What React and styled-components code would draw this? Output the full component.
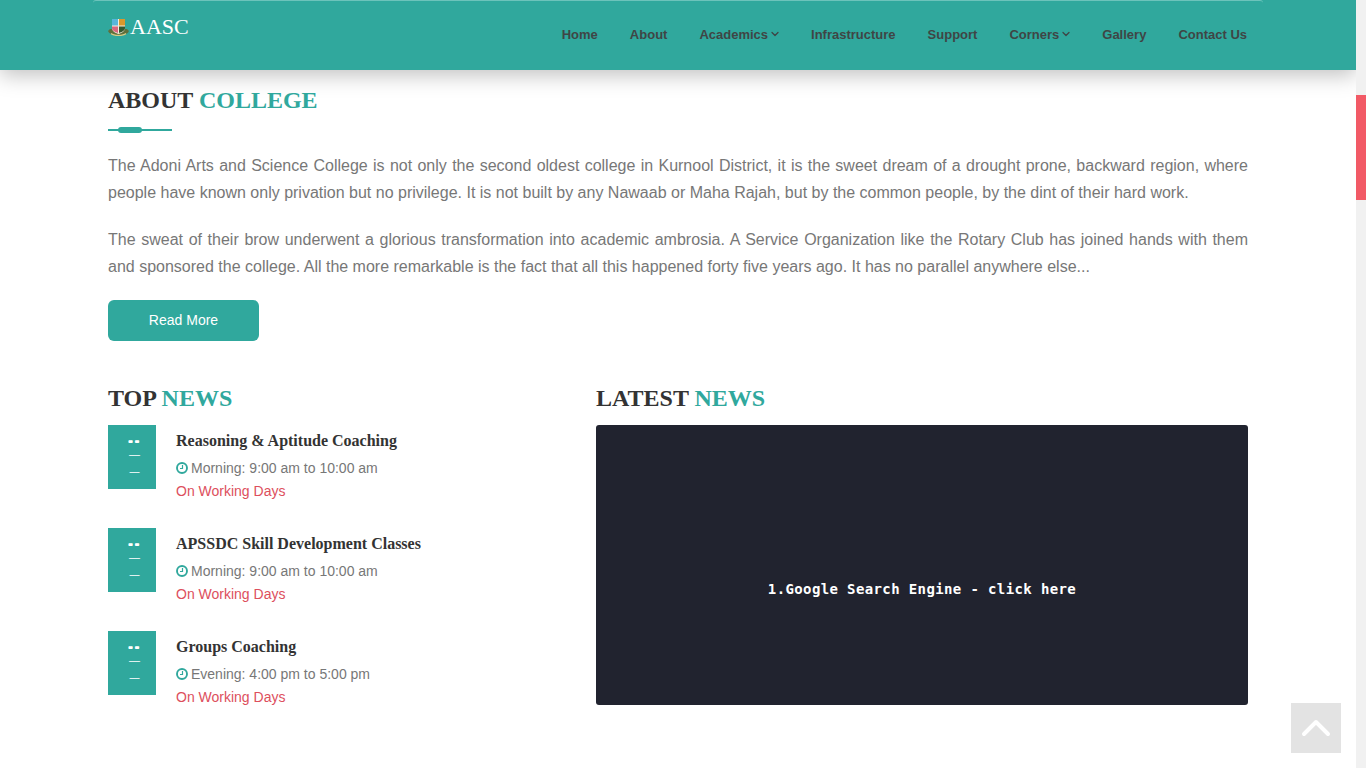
import React from "react";
import styled, { createGlobalStyle } from "styled-components";
import { FiChevronDown, FiChevronUp } from "react-icons/fi";

const teal = "#30a89d";

const GlobalStyle = createGlobalStyle`
  html, body {
    margin: 0;
    padding: 0;
    height: 768px;
    overflow: hidden;
    background: #fff;
    font-family: "Liberation Sans", Arial, sans-serif;
  }
  * { box-sizing: border-box; }
`;

const Page = styled.div`
  display: flex;
  height: 768px;
`;

const Main = styled.div`
  flex: 1;
  min-width: 0;
`;

const ScrollTrack = styled.div`
  width: 10px;
  background: #f1f1f1;
  padding-top: 95px;
`;

const ScrollThumb = styled.div`
  height: 105px;
  background: #f25a66;
`;

const Header = styled.header`
  height: 70px;
  background: ${teal};
  box-shadow: 0 5px 20px rgba(0, 0, 0, 0.25);
`;

const HeaderInner = styled.div`
  width: 1170px;
  height: 70px;
  margin: 0 auto;
  padding: 0 15px;
  display: flex;
  justify-content: space-between;
  border-top: 1px solid #6cc3bb;
  border-radius: 3px 3px 0 0;
`;

const Brand = styled.a`
  display: flex;
  align-items: center;
  gap: 1px;
  height: 52px;
  color: #fff;
  font-family: "Liberation Serif", serif;
  font-size: 22px;
`;

const Nav = styled.nav`
  display: flex;
  align-items: center;
  gap: 32px;
  height: 66px;
  padding-right: 1px;
`;

const NavItem = styled.a`
  display: flex;
  align-items: center;
  gap: 1px;
  color: #3f4545;
  font-size: 13px;
  font-weight: 700;
  svg {
    margin-right: -2px;
    stroke-width: 2.6;
  }
`;

const Container = styled.div`
  width: 1170px;
  margin: 0 auto;
  padding: 15px 15px 0;
`;

const Heading = styled.h2`
  margin: 0;
  font-family: "Liberation Serif", serif;
  font-size: 24px;
  line-height: 30px;
  font-weight: 700;
  color: #333;
  text-transform: uppercase;
`;

const Accent = styled.span`
  color: ${teal};
`;

const Divider = styled.div`
  position: relative;
  width: 64px;
  height: 2px;
  margin: 14px 0 21px;
  background: ${teal};
`;

const DividerPill = styled.span`
  position: absolute;
  left: 10px;
  top: -2px;
  width: 24px;
  height: 6px;
  border-radius: 3px;
  background: ${teal};
`;

const Paragraph = styled.p`
  margin: 0 0 20px;
  font-size: 16px;
  line-height: 27px;
  color: #777;
  text-align: justify;
`;

const ReadMore = styled.a`
  display: flex;
  align-items: center;
  justify-content: center;
  width: 151px;
  height: 41px;
  margin-top: 20px;
  padding-bottom: 1px;
  border-radius: 6px;
  background: ${teal};
  color: #fff;
  font-size: 14px;
`;

const Columns = styled.div`
  display: grid;
  grid-template-columns: 488px 652px;
  margin-top: 42px;
`;

const NewsHeading = styled(Heading)`
  margin-bottom: 12px;
`;

const NewsList = styled.div`
  display: flex;
  flex-direction: column;
  gap: 25px;
`;

const NewsItem = styled.div`
  display: flex;
  gap: 20px;
`;

const DateBox = styled.div`
  width: 48px;
  height: 64px;
  padding: 5px 0 0 5px;
  background: ${teal};
  color: #fff;
  display: flex;
  flex-direction: column;
  align-items: center;
  overflow: hidden;
`;

const DateDay = styled.span`
  height: 19px;
  font-size: 15px;
  line-height: 19px;
  font-weight: 700;
  letter-spacing: 1.5px;
  text-shadow: 0 1px 0 #fff;
`;

const DateLine = styled.span`
  height: ${(p) => p.$height}px;
  font-size: ${(p) => p.$size}px;
  line-height: ${(p) => p.$height}px;
`;

const NewsBody = styled.div`
  display: flex;
  flex-direction: column;
  padding-top: 6px;
`;

const NewsTitle = styled.h4`
  margin: 0 0 6px;
  font-family: "Liberation Serif", serif;
  font-size: 16px;
  line-height: 20px;
  font-weight: 700;
  color: #333;
`;

const NewsTime = styled.div`
  display: flex;
  align-items: center;
  gap: 3px;
  font-size: 14px;
  line-height: 23px;
  color: #777;
  svg {
    margin-bottom: 2px;
  }
`;

const NewsDays = styled.div`
  font-size: 14px;
  line-height: 23px;
  color: #dd4f5d;
`;

const VideoPanel = styled.div`
  height: 280px;
  border-radius: 3px;
  background: #21232f;
  display: flex;
  align-items: center;
  justify-content: center;
  padding-top: 48px;
  color: #fff;
  font-family: "DejaVu Sans Mono", monospace;
  font-size: 14px;
  font-weight: 700;
  letter-spacing: 0.38px;
`;

const BackToTop = styled.a`
  position: fixed;
  right: 25px;
  bottom: 15px;
  width: 50px;
  height: 50px;
  display: flex;
  align-items: center;
  justify-content: center;
  background: #e3e3e3;
  color: #fff;
`;

const Crest = () => (
  <svg width="21" height="19" viewBox="0 0 21 19">
    <path d="M0 13c2 6 19 6 21 0l-2-2H2z" fill="#5f6f3c" />
    <path d="M4 1h13v9c0 3-3 5-6.500 6C7 15 4 13 4 10z" fill="#f4efe0" />
    <rect x="4" y="1" width="6" height="6.500" fill="#57b6da" />
    <rect x="11" y="1" width="6" height="6.500" fill="#d9982c" />
    <path d="M4 8.500h6V15c-3-1-6-2.500-6-5z" fill="#d8677d" />
    <path d="M11 8.500h6V10c0 2.500-3 4-6 5z" fill="#34592f" />
    <path d="M3 15.500c3 2.500 12 2.500 15 0" stroke="#d6cb84" strokeWidth="1.200" fill="none" />
  </svg>
);

const Clock = () => (
  <svg width="12" height="12" viewBox="0 0 12 12" fill="none" stroke={teal}>
    <circle cx="6" cy="6" r="5" strokeWidth="1.900" />
    <path d="M6.500 3v3.500H4" strokeWidth="1.200" />
  </svg>
);

const navItems = [
  { label: "Home" },
  { label: "About" },
  { label: "Academics", menu: true },
  { label: "Infrastructure" },
  { label: "Support" },
  { label: "Corners", menu: true },
  { label: "Gallery" },
  { label: "Contact Us" },
];

const news = [
  { title: "Reasoning & Aptitude Coaching", time: "Morning: 9:00 am to 10:00 am" },
  { title: "APSSDC Skill Development Classes", time: "Morning: 9:00 am to 10:00 am" },
  { title: "Groups Coaching", time: "Evening: 4:00 pm to 5:00 pm" },
];

export default function App() {
  return (
    <Page>
      <GlobalStyle />
      <Main>
        <Header>
          <HeaderInner>
            <Brand>
              <Crest />
              AASC
            </Brand>
            <Nav>
              {navItems.map((item) => (
                <NavItem key={item.label}>
                  {item.label}
                  {item.menu && <FiChevronDown size={12} />}
                </NavItem>
              ))}
            </Nav>
          </HeaderInner>
        </Header>
        <Container>
          <Heading>
            About <Accent>College</Accent>
          </Heading>
          <Divider>
            <DividerPill />
          </Divider>
          <Paragraph>
            The Adoni Arts and Science College is not only the second oldest college in Kurnool
            District, it is the sweet dream of a drought prone, backward region, where people have
            known only privation but no privilege. It is not built by any Nawaab or Maha Rajah, but
            by the common people, by the dint of their hard work.
          </Paragraph>
          <Paragraph>
            The sweat of their brow underwent a glorious transformation into academic ambrosia. A
            Service Organization like the Rotary Club has joined hands with them and sponsored the
            college. All the more remarkable is the fact that all this happened forty five years
            ago. It has no parallel anywhere else...
          </Paragraph>
          <ReadMore>Read More</ReadMore>
          <Columns>
            <div>
              <NewsHeading>
                Top <Accent>News</Accent>
              </NewsHeading>
              <NewsList>
                {news.map((n) => (
                  <NewsItem key={n.title}>
                    <DateBox>
                      <DateDay>--</DateDay>
                      <DateLine $size={11} $height={10}>—</DateLine>
                      <DateLine $size={10} $height={26}>—</DateLine>
                    </DateBox>
                    <NewsBody>
                      <NewsTitle>{n.title}</NewsTitle>
                      <NewsTime>
                        <Clock />
                        {n.time}
                      </NewsTime>
                      <NewsDays>On Working Days</NewsDays>
                    </NewsBody>
                  </NewsItem>
                ))}
              </NewsList>
            </div>
            <div>
              <NewsHeading>
                Latest <Accent>News</Accent>
              </NewsHeading>
              <VideoPanel>1.Google Search Engine - click here</VideoPanel>
            </div>
          </Columns>
        </Container>
      </Main>
      <ScrollTrack>
        <ScrollThumb />
      </ScrollTrack>
      <BackToTop>
        <FiChevronUp size={48} strokeWidth={2} />
      </BackToTop>
    </Page>
  );
}
